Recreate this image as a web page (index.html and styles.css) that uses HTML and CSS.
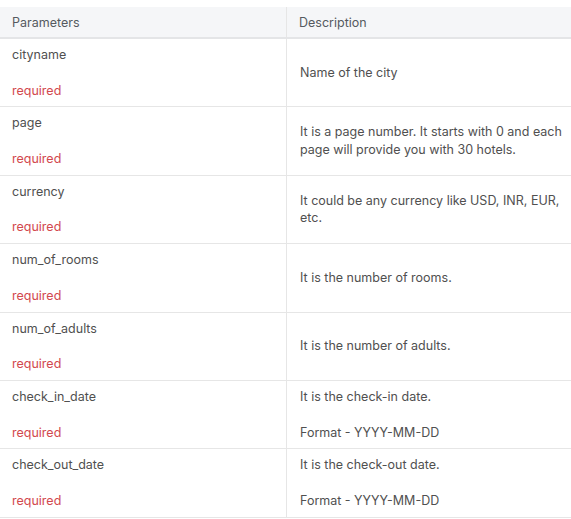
FILE: index.html
```html
<!DOCTYPE html>
<html>
<head>
<meta charset="utf-8">
<link rel="stylesheet" href="styles.css">
</head>
<body>
<div class="wrap">
<table class="params">
  <thead>
    <tr><th class="c1">Parameters</th><th>Description</th></tr>
  </thead>
  <tbody>
    <tr><td class="c1">cityname<br><br><span class="req">required</span></td><td>Name of the city</td></tr>
    <tr><td class="c1">page<br><br><span class="req">required</span></td><td>It is a page number. It starts with 0 and each page will provide you with 30 hotels.</td></tr>
    <tr><td class="c1">currency<br><br><span class="req">required</span></td><td>It could be any currency like USD, INR, EUR, etc.</td></tr>
    <tr><td class="c1">num_of_rooms<br><br><span class="req">required</span></td><td>It is the number of rooms.</td></tr>
    <tr><td class="c1">num_of_adults<br><br><span class="req">required</span></td><td>It is the number of adults.</td></tr>
    <tr><td class="c1">check_in_date<br><br><span class="req">required</span></td><td>It is the check-in date.<br><br>Format - YYYY-MM-DD</td></tr>
    <tr><td class="c1">check_out_date<br><br><span class="req">required</span></td><td>It is the check-out date.<br><br>Format - YYYY-MM-DD</td></tr>
  </tbody>
</table>
</div>
</body>
</html>
```

FILE: styles.css
```css
html, body {
  margin: 0;
  padding: 0;
  background: #ffffff;
}
.wrap {
  padding-top: 7px;
}
.params {
  width: 100%;
  border-collapse: collapse;
  font-family: Inter, "Liberation Sans", sans-serif;
  font-size: 12.5px;
  color: #505050;
}
.params th {
  background: #f5f6f8;
  font-weight: 400;
  text-align: left;
  color: #555a60;
  height: 30px;
  padding: 0 12px;
  border-bottom: 2px solid #e4e5e7;
}
.params th.c1,
.params td.c1 {
  width: 262px;
  border-right: 1px solid #e6e6e6;
}
.params td {
  padding: 7px 4px 7px 13px;
  line-height: 17.8px;
  vertical-align: middle;
  border-bottom: 1px solid #e6e6e6;
}
.params td.c1 {
  padding-left: 12px;
  padding-right: 12px;
}
.req {
  color: #d2494e;
}
```
